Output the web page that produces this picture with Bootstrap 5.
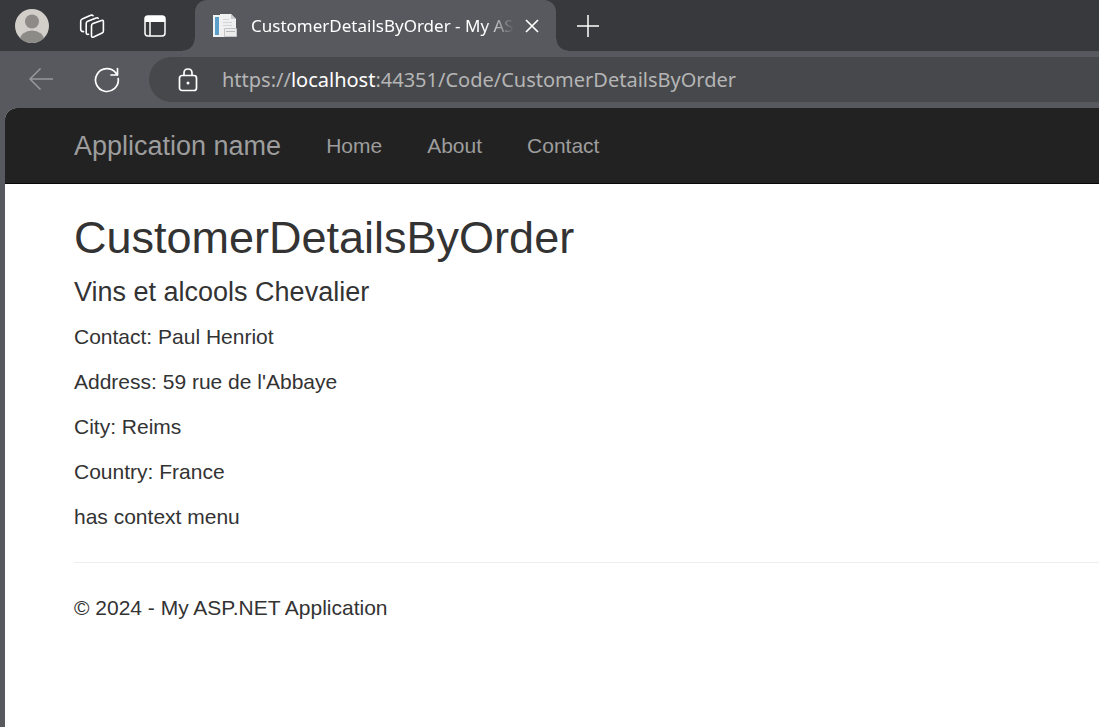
<!DOCTYPE html>
<html lang="en">
<head>
<meta charset="utf-8">
<meta name="viewport" content="width=device-width, initial-scale=1">
<title>CustomerDetailsByOrder - My ASP.NET Application</title>
<link href="https://cdn.jsdelivr.net/npm/bootstrap@5.3.0/dist/css/bootstrap.min.css" rel="stylesheet">
<style>
  body { background: #58595e; font-family: "Liberation Sans", Arial, sans-serif; font-size: 21px; line-height: 30px; color: #333; }
  .chrome-ui { font-family: "Noto Sans", "Segoe UI", sans-serif; }
  .tab-strip { background: #38393d; height: 51px; }
  .icon-btn { color: #fff; background: none; border: 0; padding: 0; display: flex; flex-shrink: 0; }
  .icon-btn:disabled { color: #97989b; }
  .strip-tools { width: 195px; padding-left: 15px; }
  .profile { margin-right: 30px; }
  .workspaces { margin-right: 39px; }
  .browser-tab { background: #58595e; width: 361px; border-radius: 12px 12px 0 0; padding: 0 14px 0 18px; position: relative; }
  .browser-tab::before, .browser-tab::after { content: ""; position: absolute; bottom: 0; width: 12px; height: 12px; }
  .browser-tab::before { right: 100%; background: radial-gradient(circle at 0 0, transparent 11px, #58595e 12px); }
  .browser-tab::after { left: 100%; background: radial-gradient(circle at 100% 0, transparent 11px, #58595e 12px); }
  .tab-title { font-size: 17px; line-height: 24px; color: #fff; margin-left: 14px; -webkit-mask-image: linear-gradient(90deg, #000 calc(100% - 30px), transparent); mask-image: linear-gradient(90deg, #000 calc(100% - 30px), transparent); }
  .new-tab { margin-left: 21px; }
  .toolbar { padding: 6px 0 6px 28px; }
  .refresh { margin: 0 29px 0 40px; }
  .address { background: #47484b; height: 45px; border-radius: 23px 0 0 23px; font-size: 20px; color: #b5b5b6; padding-left: 27px; min-width: 0; gap: 22px; }
  .address label { cursor: text; }
  .address .host { color: #fff; }
  .address input { background: none; border: 0; outline: 0; padding: 0; color: inherit; min-width: 0; font: inherit; }
  .page { margin-left: 5px; background: #fff; border-top-left-radius: 12px; overflow: hidden; }
  .site-nav { background: #222; border-bottom: 1px solid #080808; height: 76px; padding-left: 69px; gap: 45px; }
  .site-nav a { color: #9d9d9d; text-decoration: none; }
  .site-nav .brand { font-size: 27px; }
  .content { padding: 29px 0 30px 69px; }
  .content h2 { font-size: 45px; line-height: 50px; font-weight: 400; margin: 0 0 14px; }
  .content h4 { font-size: 27px; line-height: 30px; font-weight: 400; margin: 0 0 15px; }
  .content p { margin: 0 0 15px; }
  .content hr { margin: 30px 0; border-top: 1px solid #eee; opacity: 1; }
</style>
</head>
<body class="d-flex flex-column min-vh-100">
<header class="chrome-ui">
  <div class="tab-strip d-flex">
    <div class="strip-tools d-flex align-items-center flex-shrink-0">
      <button class="icon-btn profile" type="button" aria-label="Profile">
        <svg width="34" height="34" viewBox="0 0 34 34"><defs><clipPath id="face"><circle cx="17" cy="17" r="17"/></clipPath></defs><g clip-path="url(#face)"><path fill="#d2cfcb" d="M0 0h34v34H0z"/><circle cx="17" cy="12.500" r="7" fill="#8d8b87"/><ellipse cx="17" cy="31" rx="12" ry="9.500" fill="#8d8b87"/></g></svg>
      </button>
      <button class="icon-btn workspaces" type="button" aria-label="Workspaces">
        <svg width="26" height="26" viewBox="0 0 26 26" fill="none" stroke="currentColor" stroke-width="1.600" stroke-linejoin="round" stroke-linecap="round"><path d="M12.500 12.800q0-1.600 1.500-2.200l8.500-3.200q1.900-.6 1.900 1.300v9.200q0 1.400-1.300 2L14.600 24q-2.100.9-2.100-1.200z"/><path d="M9.500 21.200q-2.300.6-2.300-1.400v-9.300q0-1.600 1.500-2.200l8.500-3.300q1.500-.5 2 .4"/><path d="M4.500 18.600q-2.800-.2-2.800-2.400V8.300q0-1.600 1.500-2.200L11.700 2.300q1.600-.6 2.400.4"/></svg>
      </button>
      <button class="icon-btn" type="button" aria-label="Tab actions">
        <svg width="22" height="22" viewBox="0 0 22 22" fill="none" stroke="currentColor" stroke-width="1.500"><rect x="1" y="1" width="20" height="20" rx="3"/><path fill="currentColor" stroke="none" d="M1 7V4q0-3 3-3h14q3 0 3 3v3z"/><path d="M6 7v14"/></svg>
      </button>
    </div>
    <div class="browser-tab d-flex align-items-center">
      <svg class="flex-shrink-0" width="24" height="24" viewBox="0 0 24 24"><path fill="#f1f2f3" d="M0 1h7v22H0z"/><path fill="#5a9fca" d="M2 3h4v18H2z"/><path fill="#f0f0f0" d="M7 0h11l5 5v18H7z"/><path stroke="#d3d6d8" d="M10 5.500h6M10 8.500h9M10 11.500h9"/><path fill="#c6cacd" d="M18 0l5 5h-5z"/><path fill="#ececec" stroke="#c2c5c7" d="M11.500 14.500h12v8h-12z"/><path stroke="#b5b8ba" d="M13 17.500h9"/></svg>
      <div class="tab-title text-nowrap">CustomerDetailsByOrder - My AS</div>
      <button class="icon-btn ms-auto" type="button" aria-label="Close tab"><svg width="20" height="20" viewBox="0 0 20 20" stroke="currentColor" stroke-width="1.700"><path d="M4 4l12 12M16 4L4 16"/></svg></button>
    </div>
    <button class="icon-btn new-tab align-items-center" type="button" aria-label="New tab"><svg width="22" height="22" viewBox="0 0 22 22" stroke="currentColor" stroke-width="1.500"><path d="M11 0v22M0 11h22"/></svg></button>
  </div>
  <div class="toolbar d-flex align-items-center">
    <button class="icon-btn" type="button" aria-label="Back" disabled><svg width="26" height="24" viewBox="0 0 26 24" fill="none" stroke="currentColor" stroke-width="1.500"><path d="M25 11H2M12.500 .500L2 11l10.500 10.500"/></svg></button>
    <button class="icon-btn refresh" type="button" aria-label="Refresh"><svg width="26" height="26" viewBox="0 0 26 26" fill="none" stroke="currentColor" stroke-width="1.700" stroke-linecap="round" stroke-linejoin="round"><path d="M24.200 11.500A11.400 11.400 0 1 1 22 6.200L23.500 8M23.500 1.500V8h-6.500"/></svg></button>
    <div class="address d-flex align-items-center flex-fill">
      <svg class="flex-shrink-0" width="24" height="26" viewBox="0 0 24 26" fill="none" stroke="#fff" stroke-width="1.700"><rect x="3.500" y="8.500" width="17" height="15" rx="2.500"/><path d="M8 8.500V6q0-4 4-4t4 4v2.500"/><circle cx="12" cy="16" r="1.500" fill="#fff" stroke="none"/></svg>
      <div class="d-flex flex-fill">
        <label class="text-nowrap" for="url">https://<span class="host">localhost</span></label><input class="flex-fill" id="url" type="text" value=":44351/Code/CustomerDetailsByOrder" spellcheck="false">
      </div>
    </div>
  </div>
</header>
<div class="page flex-fill">
  <nav class="site-nav d-flex align-items-center" aria-label="Main">
    <a class="brand" href="#">Application name</a>
    <a href="#">Home</a>
    <a href="#">About</a>
    <a href="#">Contact</a>
  </nav>
  <main class="content">
    <h2>CustomerDetailsByOrder</h2>
    <h4>Vins et alcools Chevalier</h4>
    <p>Contact: Paul Henriot</p>
    <p>Address: 59 rue de l'Abbaye</p>
    <p>City: Reims</p>
    <p>Country: France</p>
    <p>has context menu</p>
    <hr>
    <footer><p>© 2024 - My ASP.NET Application</p></footer>
  </main>
</div>
<script src="https://cdn.jsdelivr.net/npm/bootstrap@5.3.0/dist/js/bootstrap.bundle.min.js"></script>
</body>
</html>
